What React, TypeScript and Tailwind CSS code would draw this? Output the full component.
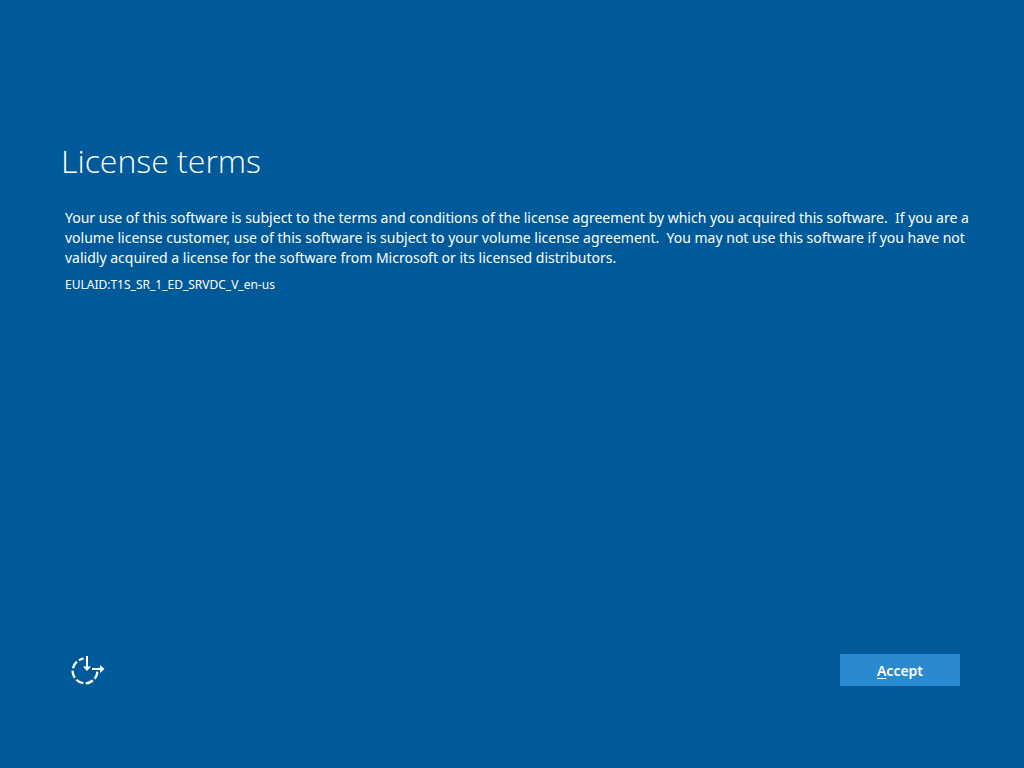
import React from 'react';

const licenseText =
  'Your use of this software is subject to the terms and conditions of the license agreement by which you acquired this software.  If you are a volume license customer, use of this software is subject to your volume license agreement.  You may not use this software if you have not validly acquired a license for the software from Microsoft or its licensed distributors.';

function EaseOfAccessIcon() {
  return (
    <svg className="w-9 h-8" viewBox="0 0 36 32" fill="none" stroke="white" strokeWidth="2.3" aria-hidden="true">
      <path d="M27.4 17.6A12.4 12.4 0 1 1 13.6 4.6" strokeDasharray="7.8 2.4" />
      <path d="M17 2v11" strokeWidth="2" />
      <path d="M13 12.5h8L17 17z" fill="white" stroke="none" />
      <path d="M22 15h9" strokeWidth="2" />
      <path d="M30 11l4.5 4-4.5 4z" fill="white" stroke="none" />
    </svg>
  );
}

export default function App() {
  return (
    <div className="min-h-screen flex flex-col bg-[#005a9a] text-white font-['Noto_Sans','Open_Sans',sans-serif]">
      <main className="flex-1 pt-[138px] pl-[65px] pr-12">
        <h1 className="-ml-1 text-[32px] leading-[46px] font-light font-['Open_Sans',sans-serif]">License terms</h1>
        <p className="mt-6 text-[14px] leading-5 whitespace-pre-wrap">{licenseText}</p>
        <p className="mt-2 text-[12px] leading-[18px]">EULAID:T1S_SR_1_ED_SRVDC_V_en-us</p>
      </main>

      <footer className="flex items-center justify-between pl-[70px] pr-16 pb-[82px]">
        <button type="button" aria-label="Ease of access">
          <EaseOfAccessIcon />
        </button>
        <button type="button" className="w-[120px] h-8 bg-[#2a8ad0] text-[14px] font-semibold">
          <span className="underline underline-offset-2">A</span>ccept
        </button>
      </footer>
    </div>
  );
}
